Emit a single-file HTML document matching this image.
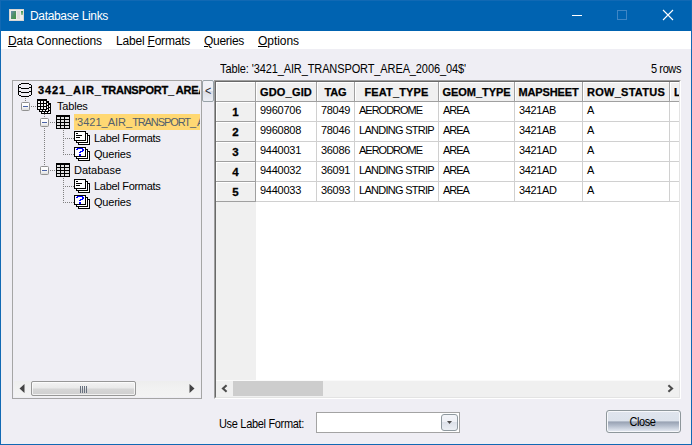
<!DOCTYPE html>
<html>
<head>
<meta charset="utf-8">
<title>Database Links</title>
<style>
html,body{margin:0;padding:0;}
body{width:692px;height:445px;overflow:hidden;background:#efeef4;font-family:"Liberation Sans",sans-serif;font-size:11px;color:#000;}
#win{position:relative;width:692px;height:445px;overflow:hidden;background:#efeef4;}
.abs{position:absolute;}
.t{position:absolute;white-space:pre;line-height:14px;height:14px;}
.ms{transform:scaleY(1.12);transform-origin:0 11px;}
/* window frame */
#frame{position:absolute;left:0;top:0;width:690px;height:443px;border:1px solid #1169b4;pointer-events:none;z-index:50;}
#title{position:absolute;left:0;top:0;width:692px;height:31px;background:#0063b1;}
#title .cap{position:absolute;left:30px;top:8px;font-size:12px;line-height:16px;color:#fff;letter-spacing:-0.34px;white-space:pre;}
#menu{position:absolute;left:1px;top:31px;width:690px;height:18px;background:#fff;}
#menu span{position:absolute;top:2px;font-size:12px;line-height:16px;white-space:pre;}
#menu u{text-decoration:underline;text-underline-offset:1px;}
/* tree */
#tree{position:absolute;left:12px;top:80px;width:188px;height:317px;border:1px solid #a5a5a5;overflow:hidden;}
#tree .t{font-size:11px;}
.hl{position:absolute;background:#ffd873;}
/* grid */
#gridouter{position:absolute;left:214px;top:80px;width:465px;height:317px;border-style:solid;border-width:1px;border-color:#a0a0a0 #fff #fff #a0a0a0;}
#grid{position:absolute;left:0;top:0;width:463px;height:315px;border-style:solid;border-width:1px;border-color:#696969 #e3e3e3 #e3e3e3 #696969;background:#fff;overflow:hidden;}
.hd{position:absolute;background:#f0f0f0;box-sizing:border-box;border-right:1px solid #a0a0a0;border-bottom:1px solid #a0a0a0;box-shadow:inset 1px 1px 0 #fff;font-weight:bold;font-size:11px;text-align:center;line-height:14px;white-space:pre;overflow:hidden;-webkit-text-stroke:0.25px #000;}
.rh{position:absolute;left:0;width:40px;height:20px;background:#f0f0f0;box-sizing:border-box;border-right:1px solid #a0a0a0;border-bottom:1px solid #a0a0a0;box-shadow:inset 1px 1px 0 #fff;font-weight:bold;font-size:11.5px;text-align:center;line-height:14px;padding-top:3px;-webkit-text-stroke:0.3px #000;}
.vl{position:absolute;width:1px;background:#d0d0d0;top:20px;height:100px;}
.hl2{position:absolute;height:1px;background:#d0d0d0;left:40px;width:423px;}
.c{position:absolute;font-size:11px;line-height:14px;white-space:pre;transform-origin:0 50%;}
</style>
</head>
<body>
<div id="win">

<!-- title bar -->
<div id="title">
  <svg class="abs" style="left:9px;top:9px" width="15" height="12" viewBox="0 0 15 12">
    <defs>
      <linearGradient id="g1" x1="0" y1="0" x2="1" y2="1"><stop offset="0" stop-color="#6a8fb4"/><stop offset="0.5" stop-color="#4f8f6a"/><stop offset="1" stop-color="#3f9440"/></linearGradient>
      <linearGradient id="g2" x1="0" y1="0" x2="0" y2="1"><stop offset="0" stop-color="#3f9450"/><stop offset="1" stop-color="#9fc79f"/></linearGradient>
    </defs>
    <rect x="0" y="0" width="15" height="12" fill="#d9d7d4"/>
    <rect x="1" y="1" width="13" height="10" fill="#ededeb"/>
    <rect x="2" y="2" width="5" height="8" fill="url(#g1)"/>
    <rect x="8" y="2" width="3" height="8" fill="#dedede"/>
    <rect x="12" y="2" width="2" height="4" fill="url(#g2)"/>
  </svg>
  <div class="cap">Database Links</div>
  <!-- controls -->
  <div class="abs" style="left:572px;top:15px;width:10px;height:1px;background:#fff"></div>
  <div class="abs" style="left:617px;top:10px;width:8px;height:8px;border:1px solid #3f86c5"></div>
  <svg class="abs" style="left:662px;top:9px" width="12" height="12" viewBox="0 0 12 12"><path d="M1 1 L11 11 M11 1 L1 11" stroke="#fff" stroke-width="1.1" fill="none"/></svg>
</div>

<!-- menu -->
<div id="menu">
  <span style="left:7px;letter-spacing:-0.09px"><u>D</u>ata Connections</span>
  <span style="left:115px;letter-spacing:-0.2px">Label <u>F</u>ormats</span>
  <span style="left:203px;letter-spacing:-0.29px"><u>Q</u>ueries</span>
  <span style="left:257px;letter-spacing:-0.05px"><u>O</u>ptions</span>
</div>

<!-- table caption -->
<div class="t ms" style="left:220px;top:62px;letter-spacing:-0.11px">Table: '3421_AIR_TRANSPORT_AREA_2006_04$'</div>
<div class="t ms" style="left:600px;width:81px;text-align:right;top:62px;letter-spacing:-0.4px">5 rows</div>

<!-- tree panel -->
<div id="tree">
<div id="treec" class="abs" style="left:0;top:0;width:187px;height:299px;overflow:hidden">
<!--TREE-->
  <div class="abs" style="left:12px;top:17px;width:1px;height:3px;background:repeating-linear-gradient(to bottom,#808080 0,#808080 1px,transparent 1px,transparent 2px)"></div>
  <div class="abs" style="left:18px;top:25px;width:5px;height:1px;background:repeating-linear-gradient(to right,#808080 0,#808080 1px,transparent 1px,transparent 2px)"></div>
  <div class="abs" style="left:31px;top:33px;width:1px;height:3px;background:repeating-linear-gradient(to bottom,#808080 0,#808080 1px,transparent 1px,transparent 2px)"></div>
  <div class="abs" style="left:31px;top:47px;width:1px;height:37px;background:repeating-linear-gradient(to bottom,#808080 0,#808080 1px,transparent 1px,transparent 2px)"></div>
  <div class="abs" style="left:37px;top:41px;width:5px;height:1px;background:repeating-linear-gradient(to right,#808080 0,#808080 1px,transparent 1px,transparent 2px)"></div>
  <div class="abs" style="left:37px;top:89px;width:5px;height:1px;background:repeating-linear-gradient(to right,#808080 0,#808080 1px,transparent 1px,transparent 2px)"></div>
  <div class="abs" style="left:50px;top:49px;width:1px;height:25px;background:repeating-linear-gradient(to bottom,#808080 0,#808080 1px,transparent 1px,transparent 2px)"></div>
  <div class="abs" style="left:50px;top:57px;width:11px;height:1px;background:repeating-linear-gradient(to right,#808080 0,#808080 1px,transparent 1px,transparent 2px)"></div>
  <div class="abs" style="left:50px;top:73px;width:11px;height:1px;background:repeating-linear-gradient(to right,#808080 0,#808080 1px,transparent 1px,transparent 2px)"></div>
  <div class="abs" style="left:50px;top:97px;width:1px;height:25px;background:repeating-linear-gradient(to bottom,#808080 0,#808080 1px,transparent 1px,transparent 2px)"></div>
  <div class="abs" style="left:50px;top:105px;width:11px;height:1px;background:repeating-linear-gradient(to right,#808080 0,#808080 1px,transparent 1px,transparent 2px)"></div>
  <div class="abs" style="left:50px;top:121px;width:11px;height:1px;background:repeating-linear-gradient(to right,#808080 0,#808080 1px,transparent 1px,transparent 2px)"></div>
  <svg class="abs" style="left:5px;top:2px" width="14" height="14" viewBox="0 0 14 14" shape-rendering="crispEdges"><rect x="3" y="0" width="8" height="1" fill="#000"/><rect x="1" y="1" width="2" height="1" fill="#000"/><rect x="11" y="1" width="2" height="1" fill="#000"/><rect x="0" y="2" width="1" height="1" fill="#000"/><rect x="13" y="2" width="1" height="1" fill="#000"/><rect x="0" y="3" width="1" height="1" fill="#000"/><rect x="13" y="3" width="1" height="1" fill="#000"/><rect x="0" y="4" width="3" height="1" fill="#000"/><rect x="11" y="4" width="3" height="1" fill="#000"/><rect x="0" y="5" width="1" height="1" fill="#000"/><rect x="3" y="5" width="8" height="1" fill="#000"/><rect x="13" y="5" width="1" height="1" fill="#000"/><rect x="0" y="6" width="1" height="1" fill="#000"/><rect x="13" y="6" width="1" height="1" fill="#000"/><rect x="0" y="7" width="1" height="1" fill="#000"/><rect x="13" y="7" width="1" height="1" fill="#000"/><rect x="0" y="8" width="3" height="1" fill="#000"/><rect x="11" y="8" width="3" height="1" fill="#000"/><rect x="0" y="9" width="1" height="1" fill="#000"/><rect x="3" y="9" width="8" height="1" fill="#000"/><rect x="13" y="9" width="1" height="1" fill="#000"/><rect x="0" y="10" width="1" height="1" fill="#000"/><rect x="13" y="10" width="1" height="1" fill="#000"/><rect x="0" y="11" width="1" height="1" fill="#000"/><rect x="13" y="11" width="1" height="1" fill="#000"/><rect x="1" y="12" width="2" height="1" fill="#000"/><rect x="11" y="12" width="2" height="1" fill="#000"/><rect x="3" y="13" width="8" height="1" fill="#000"/></svg>
  <div class="t" style="left:25px;top:2px;font-weight:bold;-webkit-text-stroke:0.3px #000"><span style="letter-spacing:0.9px">3421_AIR_</span><span style="letter-spacing:-0.24px">TRANSPORT</span><span style="letter-spacing:1.5px">_</span><span style="letter-spacing:-0.2px">AREA_2006_04</span></div>
  <div class="abs" style="left:8px;top:21px;width:7px;height:7px;border:1px solid #919191;border-radius:1.5px;background:linear-gradient(#fff 0,#fbfbfb 50%,#dcdcdc 100%);"></div><div class="abs" style="left:10px;top:25px;width:5px;height:1px;background:#4b63a7"></div>
  <svg class="abs" style="left:24px;top:18px" width="14" height="15" viewBox="0 0 14 15" shape-rendering="crispEdges"><rect x="4" y="4" width="10" height="11" fill="#000"/><rect x="5" y="6" width="2" height="2" fill="#f4f4f4"/><rect x="5" y="9" width="2" height="2" fill="#f4f4f4"/><rect x="5" y="12" width="2" height="2" fill="#f4f4f4"/><rect x="8" y="6" width="2" height="2" fill="#f4f4f4"/><rect x="8" y="9" width="2" height="2" fill="#f4f4f4"/><rect x="8" y="12" width="2" height="2" fill="#f4f4f4"/><rect x="11" y="6" width="2" height="2" fill="#f4f4f4"/><rect x="11" y="9" width="2" height="2" fill="#f4f4f4"/><rect x="11" y="12" width="2" height="2" fill="#f4f4f4"/><rect x="2" y="2" width="10" height="11" fill="#000"/><rect x="3" y="4" width="2" height="2" fill="#f4f4f4"/><rect x="3" y="7" width="2" height="2" fill="#f4f4f4"/><rect x="3" y="10" width="2" height="2" fill="#f4f4f4"/><rect x="6" y="4" width="2" height="2" fill="#f4f4f4"/><rect x="6" y="7" width="2" height="2" fill="#f4f4f4"/><rect x="6" y="10" width="2" height="2" fill="#f4f4f4"/><rect x="9" y="4" width="2" height="2" fill="#f4f4f4"/><rect x="9" y="7" width="2" height="2" fill="#f4f4f4"/><rect x="9" y="10" width="2" height="2" fill="#f4f4f4"/><rect x="0" y="0" width="10" height="11" fill="#000"/><rect x="1" y="2" width="2" height="2" fill="#f4f4f4"/><rect x="1" y="5" width="2" height="2" fill="#f4f4f4"/><rect x="1" y="8" width="2" height="2" fill="#f4f4f4"/><rect x="4" y="2" width="2" height="2" fill="#f4f4f4"/><rect x="4" y="5" width="2" height="2" fill="#f4f4f4"/><rect x="4" y="8" width="2" height="2" fill="#f4f4f4"/><rect x="7" y="2" width="2" height="2" fill="#f4f4f4"/><rect x="7" y="5" width="2" height="2" fill="#f4f4f4"/><rect x="7" y="8" width="2" height="2" fill="#f4f4f4"/></svg>
  <div class="t" style="left:44px;top:18px;letter-spacing:-0.2px">Tables</div>
  <div class="abs" style="left:27px;top:37px;width:7px;height:7px;border:1px solid #919191;border-radius:1.5px;background:linear-gradient(#fff 0,#fbfbfb 50%,#dcdcdc 100%);"></div><div class="abs" style="left:29px;top:41px;width:5px;height:1px;background:#4b63a7"></div>
  <svg class="abs" style="left:43px;top:34px" width="14" height="14" viewBox="0 0 14 14" shape-rendering="crispEdges"><rect x="0" y="0" width="14" height="14" fill="#000"/><rect x="1" y="2" width="3" height="2" fill="#e2e2e2"/><rect x="1" y="5" width="3" height="2" fill="#e2e2e2"/><rect x="1" y="8" width="3" height="2" fill="#e2e2e2"/><rect x="1" y="11" width="3" height="2" fill="#e2e2e2"/><rect x="5" y="2" width="3" height="2" fill="#e2e2e2"/><rect x="5" y="5" width="3" height="2" fill="#e2e2e2"/><rect x="5" y="8" width="3" height="2" fill="#e2e2e2"/><rect x="5" y="11" width="3" height="2" fill="#e2e2e2"/><rect x="9" y="2" width="4" height="2" fill="#e2e2e2"/><rect x="9" y="5" width="4" height="2" fill="#e2e2e2"/><rect x="9" y="8" width="4" height="2" fill="#e2e2e2"/><rect x="9" y="11" width="4" height="2" fill="#e2e2e2"/></svg>
  <div class="hl" style="left:61px;top:33px;width:126px;height:16px"></div>
  <div class="t" style="left:62px;top:34px;color:#53606e">'3421_AIR_<span style="letter-spacing:-1.1px">TRANSPORT</span><span style="letter-spacing:1px">_</span><span style="letter-spacing:-0.5px">AREA_2006_04$'</span></div>
  <svg class="abs" style="left:61px;top:50px" width="16" height="14" viewBox="0 0 16 14" shape-rendering="crispEdges"><rect x="4" y="4" width="12" height="10" fill="#000"/><rect x="5" y="5" width="10" height="8" fill="#fff"/><rect x="2" y="2" width="12" height="10" fill="#000"/><rect x="3" y="3" width="10" height="8" fill="#fff"/><rect x="0" y="0" width="12" height="10" fill="#000"/><rect x="1" y="1" width="10" height="8" fill="#fff"/><rect x="2" y="2" width="2" height="1" fill="#000"/><rect x="2" y="4" width="6" height="1" fill="#000"/><rect x="2" y="6" width="4" height="1" fill="#000"/></svg>
  <div class="t" style="left:81px;top:50px;letter-spacing:-0.29px">Label Formats</div>
  <svg class="abs" style="left:61px;top:66px" width="16" height="14" viewBox="0 0 16 14" shape-rendering="crispEdges"><rect x="4" y="4" width="12" height="10" fill="#000"/><rect x="5" y="5" width="10" height="8" fill="#fff"/><rect x="2" y="2" width="12" height="10" fill="#000"/><rect x="3" y="3" width="10" height="8" fill="#fff"/><rect x="0" y="0" width="12" height="10" fill="#000"/><rect x="1" y="1" width="10" height="8" fill="#fff"/><rect x="3" y="1" width="6" height="1" fill="#0000ff"/><rect x="2" y="2" width="2" height="1" fill="#0000ff"/><rect x="8" y="2" width="2" height="1" fill="#0000ff"/><rect x="8" y="3" width="2" height="1" fill="#0000ff"/><rect x="6" y="4" width="3" height="1" fill="#0000ff"/><rect x="5" y="5" width="2" height="1" fill="#0000ff"/><rect x="5" y="7" width="2" height="2" fill="#0000ff"/></svg>
  <div class="t" style="left:81px;top:66px;letter-spacing:-0.22px">Queries</div>
  <div class="abs" style="left:27px;top:85px;width:7px;height:7px;border:1px solid #919191;border-radius:1.5px;background:linear-gradient(#fff 0,#fbfbfb 50%,#dcdcdc 100%);"></div><div class="abs" style="left:29px;top:89px;width:5px;height:1px;background:#4b63a7"></div>
  <svg class="abs" style="left:43px;top:82px" width="14" height="14" viewBox="0 0 14 14" shape-rendering="crispEdges"><rect x="0" y="0" width="14" height="14" fill="#000"/><rect x="1" y="2" width="3" height="2" fill="#e2e2e2"/><rect x="1" y="5" width="3" height="2" fill="#e2e2e2"/><rect x="1" y="8" width="3" height="2" fill="#e2e2e2"/><rect x="1" y="11" width="3" height="2" fill="#e2e2e2"/><rect x="5" y="2" width="3" height="2" fill="#e2e2e2"/><rect x="5" y="5" width="3" height="2" fill="#e2e2e2"/><rect x="5" y="8" width="3" height="2" fill="#e2e2e2"/><rect x="5" y="11" width="3" height="2" fill="#e2e2e2"/><rect x="9" y="2" width="4" height="2" fill="#e2e2e2"/><rect x="9" y="5" width="4" height="2" fill="#e2e2e2"/><rect x="9" y="8" width="4" height="2" fill="#e2e2e2"/><rect x="9" y="11" width="4" height="2" fill="#e2e2e2"/></svg>
  <div class="t" style="left:61px;top:82px;letter-spacing:0px">Database</div>
  <svg class="abs" style="left:61px;top:98px" width="16" height="14" viewBox="0 0 16 14" shape-rendering="crispEdges"><rect x="4" y="4" width="12" height="10" fill="#000"/><rect x="5" y="5" width="10" height="8" fill="#fff"/><rect x="2" y="2" width="12" height="10" fill="#000"/><rect x="3" y="3" width="10" height="8" fill="#fff"/><rect x="0" y="0" width="12" height="10" fill="#000"/><rect x="1" y="1" width="10" height="8" fill="#fff"/><rect x="2" y="2" width="2" height="1" fill="#000"/><rect x="2" y="4" width="6" height="1" fill="#000"/><rect x="2" y="6" width="4" height="1" fill="#000"/></svg>
  <div class="t" style="left:81px;top:98px;letter-spacing:-0.29px">Label Formats</div>
  <svg class="abs" style="left:61px;top:114px" width="16" height="14" viewBox="0 0 16 14" shape-rendering="crispEdges"><rect x="4" y="4" width="12" height="10" fill="#000"/><rect x="5" y="5" width="10" height="8" fill="#fff"/><rect x="2" y="2" width="12" height="10" fill="#000"/><rect x="3" y="3" width="10" height="8" fill="#fff"/><rect x="0" y="0" width="12" height="10" fill="#000"/><rect x="1" y="1" width="10" height="8" fill="#fff"/><rect x="3" y="1" width="6" height="1" fill="#0000ff"/><rect x="2" y="2" width="2" height="1" fill="#0000ff"/><rect x="8" y="2" width="2" height="1" fill="#0000ff"/><rect x="8" y="3" width="2" height="1" fill="#0000ff"/><rect x="6" y="4" width="3" height="1" fill="#0000ff"/><rect x="5" y="5" width="2" height="1" fill="#0000ff"/><rect x="5" y="7" width="2" height="2" fill="#0000ff"/></svg>
  <div class="t" style="left:81px;top:114px;letter-spacing:-0.22px">Queries</div>
<!--/TREE-->
</div>
<!--TSB-->
  <div class="abs" style="left:1px;top:300px;width:186px;height:16px;background:linear-gradient(#eeeeee 0,#f1f1f1 40%,#f3f3f3 100%)"></div>
  <svg class="abs" style="left:6px;top:303px" width="6" height="9" viewBox="0 0 6 9"><path d="M5.5 0 L5.5 9 L0.5 4.5 Z" fill="#444"/></svg>
  <svg class="abs" style="left:176px;top:303px" width="6" height="9" viewBox="0 0 6 9"><path d="M0.5 0 L0.5 9 L5.5 4.5 Z" fill="#444"/></svg>
  <div class="abs" style="left:18px;top:300px;width:103px;height:13px;border:1px solid #979797;border-radius:2px;background:linear-gradient(#f3f3f3 0,#eaeaea 45%,#d6d6d6 55%,#cfcfcf 100%);box-shadow:inset 0 0 0 1px rgba(255,255,255,.7)"></div>
  <div class="abs" style="left:67px;top:305px;width:1px;height:7px;background:#68717f"></div>
  <div class="abs" style="left:69px;top:305px;width:1px;height:7px;background:#68717f"></div>
  <div class="abs" style="left:71px;top:305px;width:1px;height:7px;background:#68717f"></div>
  <div class="abs" style="left:73px;top:305px;width:1px;height:7px;background:#68717f"></div>
<!--/TSB-->
</div>

<!-- collapse button -->
<div class="abs" style="left:202px;top:80px;width:10px;height:20px;border:1px solid #98a2a8;border-radius:2px;background:linear-gradient(#f1f2f7 0,#eef0f6 49%,#d9dde6 50%,#eceef4 100%);"></div>
<div class="t" style="left:205px;top:84px;font-size:13px;color:#2a2a33;transform:scaleX(0.83);transform-origin:0 0;">&lt;</div>

<!-- grid -->
<div id="gridouter"><div id="grid">
<!--GRID-->
  <div class="abs" style="left:0;top:0;width:40px;height:298px;background:#f0f0f0"></div>
  <div class="hd" style="left:0;top:0;width:40px;height:20px"></div>
  <div class="hd" style="left:40px;top:0;width:61px;height:20px;padding-top:3px;letter-spacing:0.18px">GDO_GID</div>
  <div class="hd" style="left:101px;top:0;width:38px;height:20px;padding-top:3px;letter-spacing:-0.14px">TAG</div>
  <div class="hd" style="left:139px;top:0;width:84px;height:20px;padding-top:3px;letter-spacing:0.14px">FEAT_TYPE</div>
  <div class="hd" style="left:223px;top:0;width:76px;height:20px;padding-top:3px;letter-spacing:-0.05px">GEOM_TYPE</div>
  <div class="hd" style="left:299px;top:0;width:68px;height:20px;padding-top:3px;letter-spacing:-0.14px">MAPSHEET</div>
  <div class="hd" style="left:367px;top:0;width:87px;height:20px;padding-top:3px;letter-spacing:0.26px">ROW_STATUS</div>
  <div class="hd" style="left:454px;top:0;width:60px;height:20px;padding-top:3px;text-align:left;padding-left:4px">LOAD_DATE</div>
  <div class="rh" style="top:20px">1</div>
  <div class="hl2" style="top:39px"></div>
  <div class="rh" style="top:40px">2</div>
  <div class="hl2" style="top:59px"></div>
  <div class="rh" style="top:60px">3</div>
  <div class="hl2" style="top:79px"></div>
  <div class="rh" style="top:80px">4</div>
  <div class="hl2" style="top:99px"></div>
  <div class="rh" style="top:100px">5</div>
  <div class="hl2" style="top:119px"></div>
  <div class="vl" style="left:100px"></div>
  <div class="vl" style="left:138px"></div>
  <div class="vl" style="left:222px"></div>
  <div class="vl" style="left:298px"></div>
  <div class="vl" style="left:366px"></div>
  <div class="vl" style="left:453px"></div>
  <div class="c" style="left:44px;top:21px;letter-spacing:-0.26px">9960706</div>
  <div class="c" style="left:105px;top:21px;letter-spacing:-0.32px">78049</div>
  <div class="c" style="left:143px;top:21px;letter-spacing:-1.0px">AERODROME</div>
  <div class="c" style="left:227px;top:21px;letter-spacing:-1.0px">AREA</div>
  <div class="c" style="left:303px;top:21px;letter-spacing:-0.36px">3421AB</div>
  <div class="c" style="left:371px;top:21px;letter-spacing:0px">A</div>
  <div class="c" style="left:44px;top:41px;letter-spacing:-0.26px">9960808</div>
  <div class="c" style="left:105px;top:41px;letter-spacing:-0.32px">78046</div>
  <div class="c" style="left:143px;top:41px;letter-spacing:-0.72px">LANDING STRIP</div>
  <div class="c" style="left:227px;top:41px;letter-spacing:-1.0px">AREA</div>
  <div class="c" style="left:303px;top:41px;letter-spacing:-0.36px">3421AB</div>
  <div class="c" style="left:371px;top:41px;letter-spacing:0px">A</div>
  <div class="c" style="left:44px;top:61px;letter-spacing:-0.26px">9440031</div>
  <div class="c" style="left:105px;top:61px;letter-spacing:-0.32px">36086</div>
  <div class="c" style="left:143px;top:61px;letter-spacing:-1.0px">AERODROME</div>
  <div class="c" style="left:227px;top:61px;letter-spacing:-1.0px">AREA</div>
  <div class="c" style="left:303px;top:61px;letter-spacing:-0.36px">3421AD</div>
  <div class="c" style="left:371px;top:61px;letter-spacing:0px">A</div>
  <div class="c" style="left:44px;top:81px;letter-spacing:-0.26px">9440032</div>
  <div class="c" style="left:105px;top:81px;letter-spacing:-0.32px">36091</div>
  <div class="c" style="left:143px;top:81px;letter-spacing:-0.72px">LANDING STRIP</div>
  <div class="c" style="left:227px;top:81px;letter-spacing:-1.0px">AREA</div>
  <div class="c" style="left:303px;top:81px;letter-spacing:-0.36px">3421AD</div>
  <div class="c" style="left:371px;top:81px;letter-spacing:0px">A</div>
  <div class="c" style="left:44px;top:101px;letter-spacing:-0.26px">9440033</div>
  <div class="c" style="left:105px;top:101px;letter-spacing:-0.32px">36093</div>
  <div class="c" style="left:143px;top:101px;letter-spacing:-0.72px">LANDING STRIP</div>
  <div class="c" style="left:227px;top:101px;letter-spacing:-1.0px">AREA</div>
  <div class="c" style="left:303px;top:101px;letter-spacing:-0.36px">3421AD</div>
  <div class="c" style="left:371px;top:101px;letter-spacing:0px">A</div>
  <div class="abs" style="left:0;top:298px;width:463px;height:17px;background:#f0f0f0;border-top:1px solid #fafafa;box-sizing:border-box"></div>
  <div class="abs" style="left:17px;top:299px;width:90px;height:15px;background:#cdcdcd"></div>
  <svg class="abs" style="left:4px;top:302px" width="9" height="9" viewBox="0 0 9 9"><path d="M6.6 1.3 L3 4.5 L6.6 7.7" stroke="#4d4d4d" stroke-width="2.1" fill="none"/></svg>
  <svg class="abs" style="left:450px;top:302px" width="9" height="9" viewBox="0 0 9 9"><path d="M2.4 1.3 L6 4.5 L2.4 7.7" stroke="#4d4d4d" stroke-width="2.1" fill="none"/></svg>
<!--/GRID-->
</div></div>

<!-- bottom controls -->
<div class="t ms" style="left:219px;top:417px;letter-spacing:-0.32px">Use Label Format:</div>
<div class="abs" style="left:316px;top:412px;width:142px;height:19px;border:1px solid #a3a3a3;background:#fff;"></div>
<div class="abs" style="left:441px;top:414px;width:15px;height:15px;border:1px solid #8f999f;border-radius:3px;background:linear-gradient(#f4f5f9 0,#eef0f5 49%,#dde1e9 50%,#eceff4 100%);"></div>
<svg class="abs" style="left:447px;top:421px" width="5" height="3" viewBox="0 0 5 3"><path d="M0 0 H5 L2.5 3 Z" fill="#4f4f4f"/></svg>

<div class="abs" style="left:606px;top:410px;width:73px;height:21px;border:1px solid #8e979b;border-radius:3px;background:linear-gradient(#e0e5ee 0,#dce2eb 47%,#98a2b3 52%,#b4bdcc 70%,#d9dfe9 90%,#e4e8f0 100%);box-shadow:inset 0 0 0 1px #f7f8fb;"></div>
<div class="t ms" style="left:605px;width:75px;text-align:center;top:415px;font-size:11px;letter-spacing:-0.4px">Close</div>

<div id="frame"></div>
</div>
</body>
</html>
